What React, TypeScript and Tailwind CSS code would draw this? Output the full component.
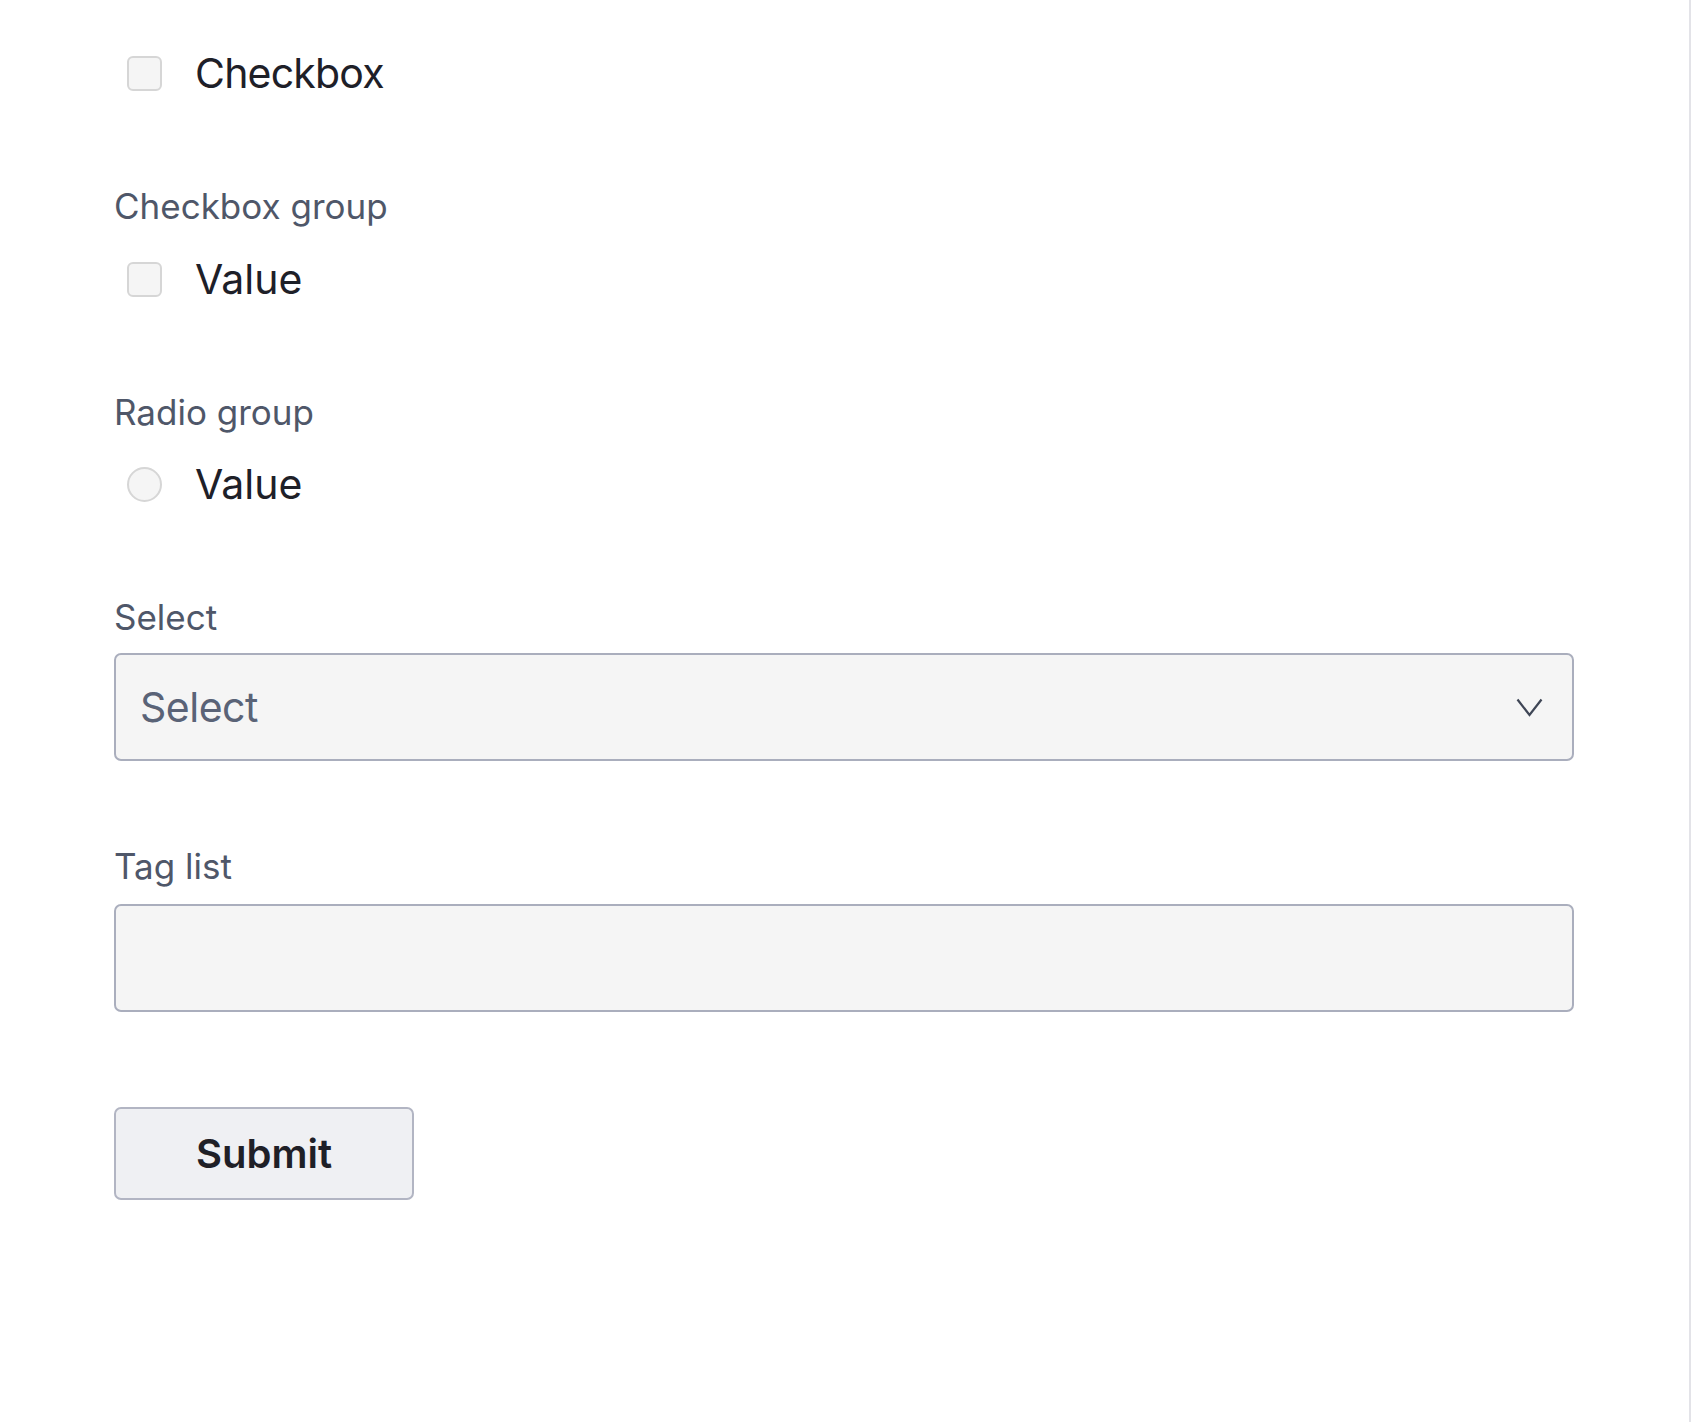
import React from "react";

const font = { fontFamily: "Inter, 'Noto Sans', sans-serif" };

function Checkbox({ label, tracking = "tracking-[-0.8px]" }: { label: string; tracking?: string }) {
  return (
    <div className="flex h-[70px] items-center">
      <span className="ml-[13px] h-[35px] w-[35px] shrink-0 rounded-[6px] border-2 border-[#d6d6d6] bg-[#f5f5f5]" />
      <span className={"ml-[33px] text-[41px] leading-none text-[#1e2028] " + tracking}>{label}</span>
    </div>
  );
}

function Radio({ label }: { label: string }) {
  return (
    <div className="flex h-[70px] items-center">
      <span className="ml-[13px] h-[35px] w-[35px] shrink-0 rounded-full border-2 border-[#d6d6d6] bg-[#f5f5f5]" />
      <span className="ml-[33px] text-[41px] leading-none tracking-[0px] text-[#1e2028]">{label}</span>
    </div>
  );
}

function Label({ children, className = "" }: { children: React.ReactNode; className?: string }) {
  return (
    <div className={"h-[52px] text-[35px] leading-[52px] text-[#4f5769] " + className}>{children}</div>
  );
}

export default function App() {
  return (
    <div className="min-h-screen w-full bg-white" style={font}>
      <div className="min-h-[1422px] border-r-2 border-[#e3e3e8] pl-[114px] pr-[115px] pt-[38px]">
        <Checkbox label="Checkbox" />

        <Label className="mt-[72px]">Checkbox group</Label>
        <div className="mt-[12px]">
          <Checkbox label="Value" tracking="tracking-[0px]" />
        </div>

        <Label className="mt-[72px]">Radio group</Label>
        <div className="mt-[11px]">
          <Radio label="Value" />
        </div>

        <Label className="mt-[72px]">Select</Label>
        <div className="mt-[10px] flex h-[108px] items-center justify-between rounded-[7px] border-2 border-[#aaaebd] bg-[#f5f5f5] pl-[24px] pr-[29px]">
          <span className="text-[41px] leading-none tracking-[-0.5px] text-[#5a6377]">Select</span>
          <svg width="27" height="19" viewBox="0 0 27 19" fill="none">
            <path d="M1.5 1.5 L13.5 17 L25.5 1.5" stroke="#3f4656" strokeWidth="2.2" strokeLinejoin="miter" />
          </svg>
        </div>

        <Label className="mt-[79px]">Tag list</Label>
        <div className="mt-[12px] h-[108px] rounded-[7px] border-2 border-[#aaaebd] bg-[#f5f5f5]" />

        <button className="mt-[95px] flex h-[93px] w-[300px] items-center justify-center rounded-[7px] border-2 border-[#b2b5c3] bg-[#eff0f3] text-[40px] font-semibold leading-none text-[#1f2027]">
          Submit
        </button>
      </div>
    </div>
  );
}
